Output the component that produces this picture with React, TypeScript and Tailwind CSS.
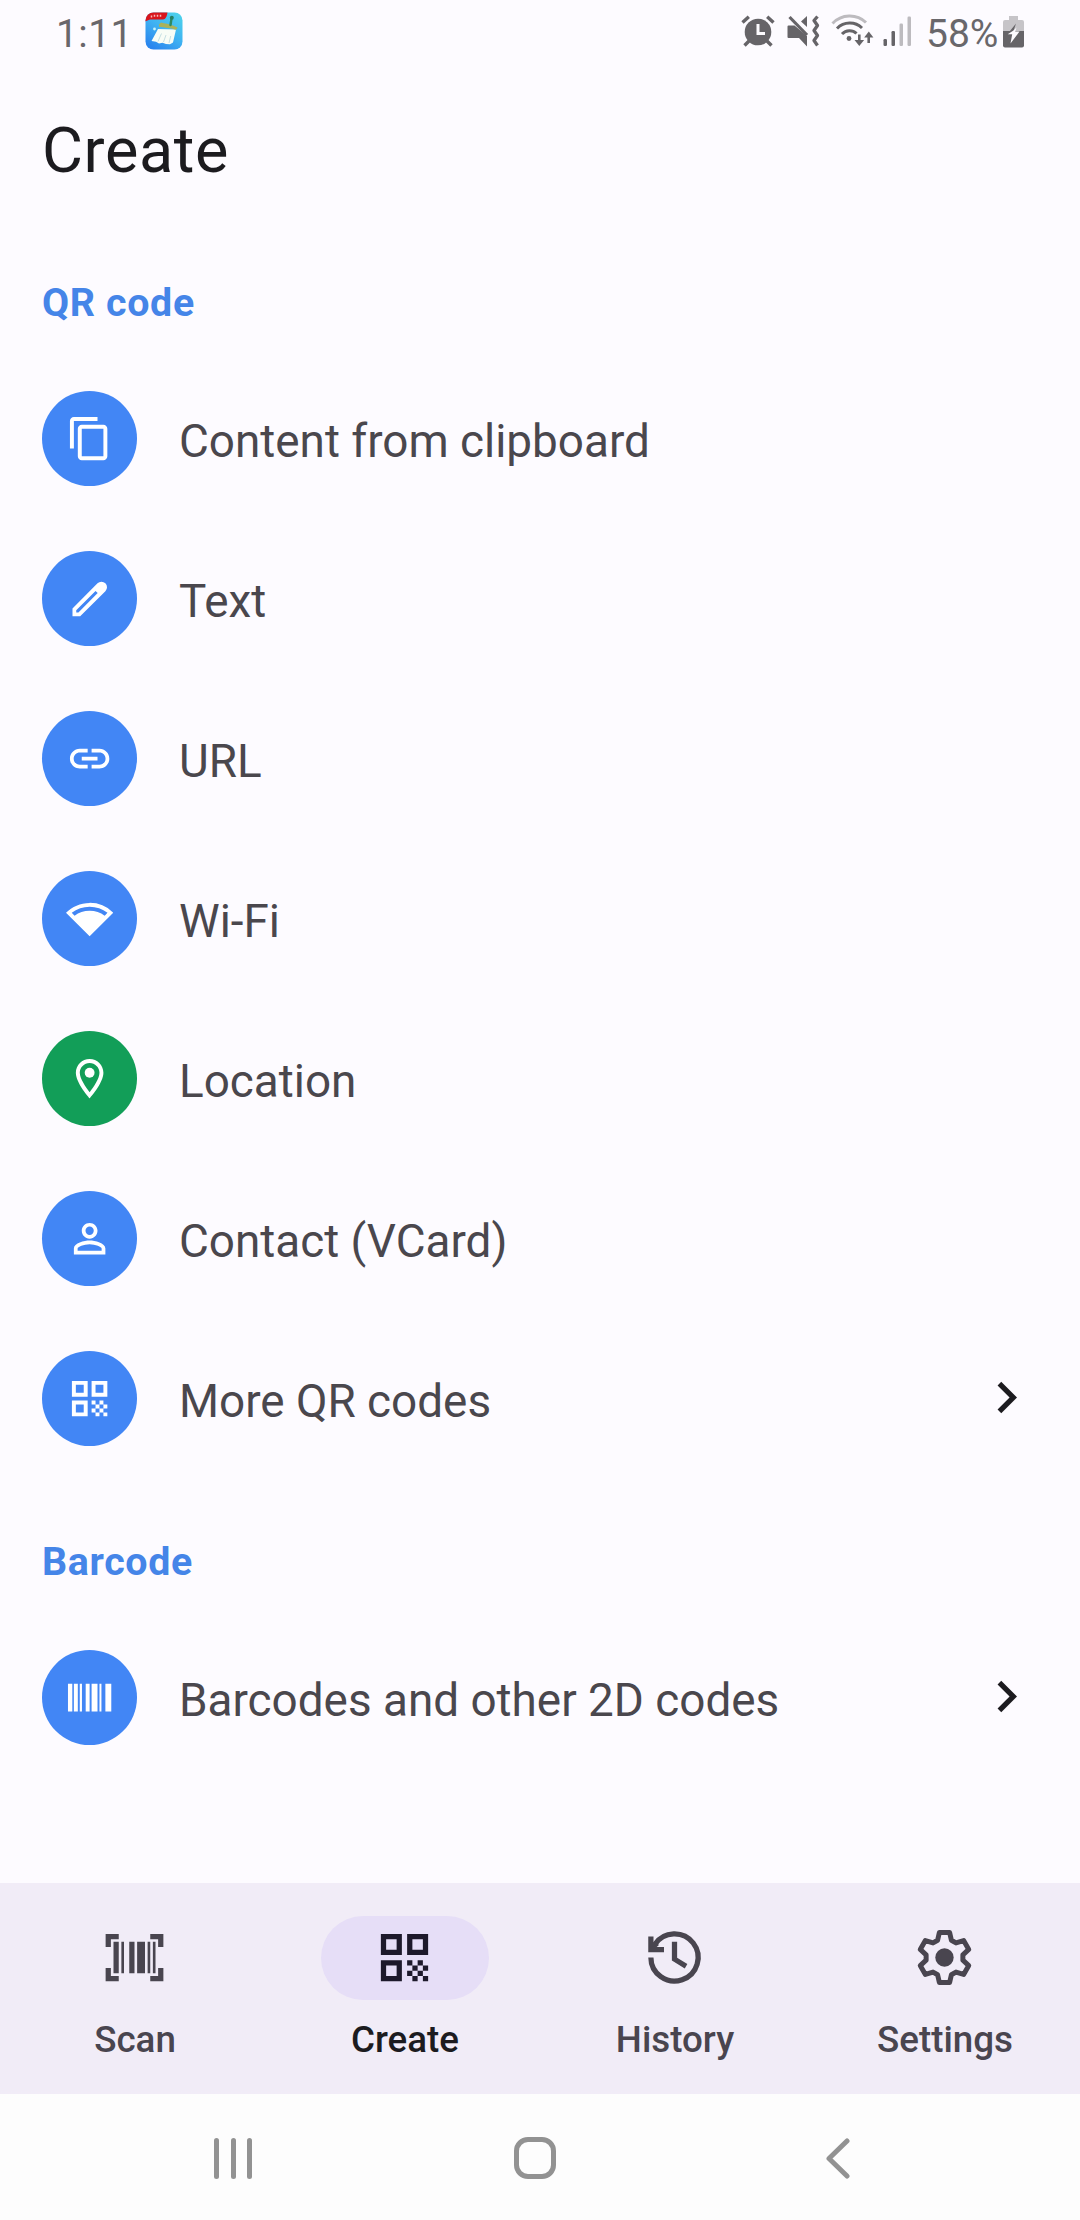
import type { ReactNode } from "react";

/* ---------- status bar drawings ---------- */

function CleanerAppIcon() {
  return (
    <svg width="38" height="38" viewBox="0 0 38 38">
      <defs>
        <linearGradient id="sky" x1="1" y1="0" x2="0.3" y2="1">
          <stop offset="0" stopColor="#4fd6ea" />
          <stop offset="0.55" stopColor="#3fb2f2" />
          <stop offset="1" stopColor="#2b86ee" />
        </linearGradient>
        <clipPath id="tile">
          <rect x="0.5" y="0.5" width="37" height="37" rx="8" />
        </clipPath>
      </defs>
      <g clipPath="url(#tile)">
        <rect width="38" height="38" fill="url(#sky)" />
        <path d="M0 0h22.500c-.3 4-2 7.500-4.500 7.500H5L0 9.500z" fill="#d9141c" />
        <path d="M6.500 3.500v2M9.500 2.800v2M12.500 2.800v2M15.500 2.800v2" stroke="#f6b9bb" strokeWidth="1.500" />
        <path d="M13 17 6.500 29l4.500.8 3 1.700 3.500-.7 3.500 1.200 4 .2 3-1.700 3-13z" fill="#f8fdf6" />
        <path d="m13 29.500 3.500-8M18.500 30l2.500-7M24 31l1.700-7" stroke="#c5dfe2" strokeWidth="1" />
        <path d="m14 12.500 2-2c4 1.500 8 1 12 3l4.500 2c-.5 1.500-1 2-2 2.300-5-2-11-2-16.500-3z" fill="#a9b25a" />
        <path d="m25.500 13 1-6.500" stroke="#2c8a63" strokeWidth="2.400" strokeLinecap="round" />
        <circle cx="26.800" cy="5.800" r="2" fill="#257f63" />
        <circle cx="9.500" cy="17" r="1.400" fill="#c9f2f7" />
      </g>
    </svg>
  );
}

function AlarmIcon() {
  return (
    <svg width="34" height="32" viewBox="0 0 34 32" fill="none" stroke="#666468">
      <path d="M1.500 7.500 7.800 1.700M32.500 7.500l-6.300-5.800" strokeWidth="3.400" />
      <path d="m8 26-4.500 4.500M26 26l4.500 4.500" strokeWidth="3.400" />
      <circle cx="17" cy="17" r="13.300" fill="#666468" stroke="none" />
      <path d="M17 9v9.500h7" stroke="#fdfbff" strokeWidth="3" />
    </svg>
  );
}

function MuteVibrateIcon() {
  return (
    <svg width="33" height="32" viewBox="0 0 33 32" fill="#666468">
      <path d="M1.500 10.500h6L20 21v10.500l-8-8.500H1.500Q.5 23 .5 22V11.500q0-1 1-1z" />
      <path d="M20 1v11l-6-5.500z" />
      <path d="m2.500 2 17.500 18" stroke="#666468" strokeWidth="3.200" />
      <path
        d="M30.500 1.500 27 5.500l3.500 5-3.500 5 3.500 5-3.500 5 3.500 5"
        fill="none"
        stroke="#666468"
        strokeWidth="3.300"
        strokeLinejoin="round"
      />
    </svg>
  );
}

function WifiTransferIcon() {
  return (
    <svg width="43" height="33" viewBox="0 0 43 33" fill="none" stroke="#666468">
      <path d="M1.500 9.500c9-9.500 24-10 33.500-1" stroke="#bdbbbf" strokeWidth="3" />
      <path d="M6 14.500c7-7 18-7.300 25-.5" strokeWidth="3" />
      <path d="M11 20c4-4.300 10.500-4.500 14.500-.500" strokeWidth="3" />
      <circle cx="18" cy="24.500" r="2.400" fill="#666468" stroke="none" />
      <path d="M28.300 20.500v8" strokeWidth="2.600" />
      <path d="M23.500 26h9.600l-4.800 6z" fill="#666468" stroke="none" />
      <path d="M37.700 22v7" strokeWidth="2.600" />
      <path d="M33.200 23.500h9.200l-4.600-6z" fill="#666468" stroke="none" />
    </svg>
  );
}

function SignalIcon() {
  return (
    <svg width="29" height="30" viewBox="0 0 29 30">
      <rect x="0.500" y="23" width="3.500" height="7" rx="1.200" fill="#666468" />
      <rect x="8.500" y="15" width="3.500" height="15" rx="1.200" fill="#666468" />
      <rect x="16.500" y="7.500" width="3.500" height="22.500" rx="1.200" fill="#bdbbbf" />
      <rect x="24.500" y="0.500" width="3.500" height="29.500" rx="1.200" fill="#bdbbbf" />
    </svg>
  );
}

function BatteryIcon() {
  return (
    <svg width="21" height="33" viewBox="0 0 21 33">
      <path d="M6 1h9v4h4q2 0 2 2v9H0V7q0-2 2-2h4z" fill="#c6c4c8" />
      <path d="M0 16h21v14.500q0 2-2 2H2q-2 0-2-2z" fill="#666468" />
      <path d="M13 8.500 4.500 19h4l2-3z" fill="#666468" />
      <path d="M10.500 15.500 4.700 19.200h4.500L7.500 28.500 16.500 16.500h-4.300l1.300-4z" fill="#fdfbff" />
    </svg>
  );
}

/* ---------- 24-unit glyphs ---------- */

function Glyph({ className, children }: { className: string; children: ReactNode }) {
  return (
    <svg viewBox="0 0 24 24" fill="currentColor" className={className}>
      {children}
    </svg>
  );
}

const copy = (
  <path d="M16 1H4c-1.100 0-2 .9-2 2v14h2V3h12V1zm3 4H8c-1.100 0-2 .9-2 2v14c0 1.100.9 2 2 2h11c1.100 0 2-.9 2-2V7c0-1.100-.9-2-2-2zm0 16H8V7h11v14z" />
);
const pencil = (
  <path
    fillRule="evenodd"
    d="M3.300 17 16 4.200a2.800 2.800 0 0 1 4 4L7.200 21H3.300zM5.200 17.900V19h1.100l9.800-9.800L15 8.100z"
  />
);
const link = (
  <path d="M3.900 12c0-1.710 1.390-3.100 3.100-3.100h4V7H7c-2.760 0-5 2.240-5 5s2.240 5 5 5h4v-1.900H7c-1.710 0-3.100-1.390-3.100-3.100zM8 13h8v-2H8v2zm9-6h-4v1.900h4c1.710 0 3.100 1.390 3.100 3.100s-1.390 3.100-3.100 3.100h-4V17h4c2.760 0 5-2.240 5-5s-2.240-5-5-5z" />
);
const wifi = (
  <path
    fillRule="evenodd"
    d="M24 8.980A16.880 16.880 0 0 0 12 4C7.310 4 3.070 5.900 0 8.980L12 21 24 8.980zM2.920 9.070C5.510 7.080 8.670 6 12 6s6.490 1.080 9.080 3.070l-1.430 1.430C17.500 8.940 14.860 8 12 8s-5.500.94-7.650 2.510L2.920 9.070z"
  />
);
const place = (
  <>
    <path d="M12 2C8.130 2 5 5.130 5 9c0 5.250 7 13 7 13s7-7.750 7-13c0-3.870-3.130-7-7-7zM7 9c0-2.760 2.240-5 5-5s5 2.240 5 5c0 2.880-2.880 7.190-5 9.880C9.920 16.210 7 11.850 7 9z" />
    <circle cx="12" cy="9" r="2.500" />
  </>
);
const person = (
  <path d="M12 5.900a2.100 2.100 0 1 1 0 4.200 2.100 2.100 0 0 1 0-4.200m0 9c2.970 0 6.100 1.460 6.100 2.100v1.100H5.900V17c0-.64 3.130-2.100 6.100-2.100M12 4C9.790 4 8 5.790 8 8s1.790 4 4 4 4-1.790 4-4-1.790-4-4-4zm0 9c-2.670 0-8 1.340-8 4v3h16v-3c0-2.660-5.330-4-8-4z" />
);
const qr = (
  <path d="M3 11h8V3H3v8zm2-6h4v4H5V5zM3 21h8v-8H3v8zm2-6h4v4H5v-4zM13 3v8h8V3h-8zm6 6h-4V5h4v4zM19 19h2v2h-2zM13 13h2v2h-2zM15 15h2v2h-2zM13 17h2v2h-2zM15 19h2v2h-2zM17 17h2v2h-2zM17 13h2v2h-2zM19 15h2v2h-2z" />
);
const barcode = (
  <path d="M1 5h2.200v14H1zM4 5h2v14H4zM7 5h1.100v14H7zM10 5h2v14h-2zM13 5h3v14h-3zM17 5h1v14h-1zM20 5h3v14h-3z" />
);
const scanner = (
  <path d="M4 6h2v12H4zM7 6h1v12H7zM10 6h2v12h-2zM13 6h3v12h-3zM17 6h1v12h-1zM19 6h1v12h-1zM1 3h5v2H3v3H1zM18 3h5v5h-2V5h-3zM1 16h2v3h3v2H1zM21 16h2v5h-5v-2h3z" />
);
const history = (
  <>
    <path d="M3 12a9 9 0 1 0 1.500-5" fill="none" stroke="currentColor" strokeWidth="2" />
    <path d="M2 4h2v2.400L5.400 6 6 7.300 5.200 8H8v2H2zM11 6h2v6.100l3.900 2.400-1 1.700L11 13.100z" />
  </>
);
const gear = (
  <>
    <path
      d="M10.050 2.450H13.950L14.630 5.440L16.370 6.440L19.290 5.530L21.240 8.910L19 11L19 13L21.240 15.090L19.290 18.470L16.370 17.560L14.630 18.560L13.950 21.550H10.050L9.370 18.560L7.630 17.560L4.710 18.470L2.760 15.090L5 13L5 11L2.760 8.910L4.710 5.530L7.630 6.440L9.370 5.440Z"
      fill="none"
      stroke="currentColor"
      strokeWidth="1.900"
      strokeLinejoin="round"
    />
    <circle cx="12" cy="12" r="3.500" />
  </>
);
const chevron = <path d="M10 6 8.590 7.410 13.170 12l-4.580 4.590L10 18l6-6z" />;

/* ---------- page ---------- */

type Item = { label: string; icon: ReactNode; green?: boolean; more?: boolean };

const qrItems: Item[] = [
  { label: "Content from clipboard", icon: copy },
  { label: "Text", icon: pencil },
  { label: "URL", icon: link },
  { label: "Wi-Fi", icon: wifi },
  { label: "Location", icon: place, green: true },
  { label: "Contact (VCard)", icon: person },
  { label: "More QR codes", icon: qr, more: true },
];

const barcodeItems: Item[] = [{ label: "Barcodes and other 2D codes", icon: barcode, more: true }];

const tabs = [
  { label: "Scan", icon: scanner },
  { label: "Create", icon: qr, active: true },
  { label: "History", icon: history },
  { label: "Settings", icon: gear },
];

function Heading({ children }: { children: ReactNode }) {
  return (
    <h2 className="flex h-[113px] items-center text-[39.375px] leading-none font-bold tracking-[0.65px] text-[#4585e8]">
      {children}
    </h2>
  );
}

function Row({ label, icon, green, more }: Item) {
  return (
    <li className="flex h-[160px] items-center pb-px">
      <span
        className={`flex size-[95px] shrink-0 items-center justify-center rounded-full text-white ${
          green ? "bg-[#129e58]" : "bg-[#4286f5]"
        }`}
      >
        <Glyph className="size-[47.250px]">{icon}</Glyph>
      </span>
      <span className="ml-[42px] flex-1 pt-[4px] text-[45.850px] leading-[54px] text-[#4a474d]">{label}</span>
      {more && <Glyph className="mb-[2px] size-[63px] text-[#1c1b1f]">{chevron}</Glyph>}
    </li>
  );
}

export default function App() {
  return (
    <div className="flex h-[2220px] w-[1080px] flex-col overflow-hidden bg-[#fdfbff] font-['Roboto',sans-serif]">
      <header className="flex h-[66px] shrink-0 items-start pl-[56px] text-[39px] leading-[46px] text-[#69676b]">
        <span className="w-[89px] pt-[11px] tracking-[0.4px]">1:11</span>
        <span className="pt-[12px]">
          <CleanerAppIcon />
        </span>
        <div className="ml-auto flex items-start pr-[56px]">
          <span className="mr-[12px] pt-[15px]">
            <AlarmIcon />
          </span>
          <span className="mr-[11px] pt-[15px]">
            <MuteVibrateIcon />
          </span>
          <span className="mr-[9px] pt-[14px]">
            <WifiTransferIcon />
          </span>
          <span className="mr-[14px] pt-[16px]">
            <SignalIcon />
          </span>
          <span className="w-[77px] pt-[11px]">58%</span>
          <span className="pt-[15px]">
            <BatteryIcon />
          </span>
        </div>
      </header>

      <main className="flex-1 px-[42px]">
        <h1 className="flex h-[168px] items-center text-[63px] leading-none tracking-[0.6px] text-[#1c1b1f]">Create</h1>
        <section className="pt-[12px]">
          <Heading>QR code</Heading>
          <ul>
            {qrItems.map((item) => (
              <Row key={item.label} {...item} />
            ))}
          </ul>
        </section>
        <section className="pt-[26px]">
          <Heading>Barcode</Heading>
          <ul>
            {barcodeItems.map((item) => (
              <Row key={item.label} {...item} />
            ))}
          </ul>
        </section>
      </main>

      <nav className="grid h-[211px] shrink-0 grid-cols-4 bg-[#f1ecf7] pt-[33px]">
        {tabs.map(({ label, icon, active }) => (
          <div key={label} className="flex flex-col items-center">
            <span
              className={`flex h-[84px] w-[168px] items-center justify-center rounded-full ${
                active ? "bg-[#e6def7] text-[#1d192b]" : "text-[#49454f]"
              }`}
            >
              <Glyph className="mr-px mb-px size-[63px]">{icon}</Glyph>
            </span>
            <span
              className={`mt-[18px] text-[36.750px] leading-[43px] font-medium ${
                active ? "text-[#1c1b1f]" : "text-[#49454f]"
              }`}
            >
              {label}
            </span>
          </div>
        ))}
      </nav>

      <footer className="flex h-[126px] shrink-0 items-center justify-between bg-[#fdfdfd] pt-[2px] pr-[230px] pl-[214px] text-[#929292]">
        <div className="flex h-[41px] w-[38px] justify-between">
          <i className="w-[5px] rounded-full bg-current" />
          <i className="w-[5px] rounded-full bg-current" />
          <i className="w-[5px] rounded-full bg-current" />
        </div>
        <div className="mr-[8px] size-[42px] rounded-[14px] border-[5px] border-current" />
        <svg width="24" height="41" viewBox="0 0 24 41" fill="none" stroke="currentColor">
          <path d="M21 3 3 20.500 21 38" strokeWidth="5" strokeLinecap="round" strokeLinejoin="round" />
        </svg>
      </footer>
    </div>
  );
}
